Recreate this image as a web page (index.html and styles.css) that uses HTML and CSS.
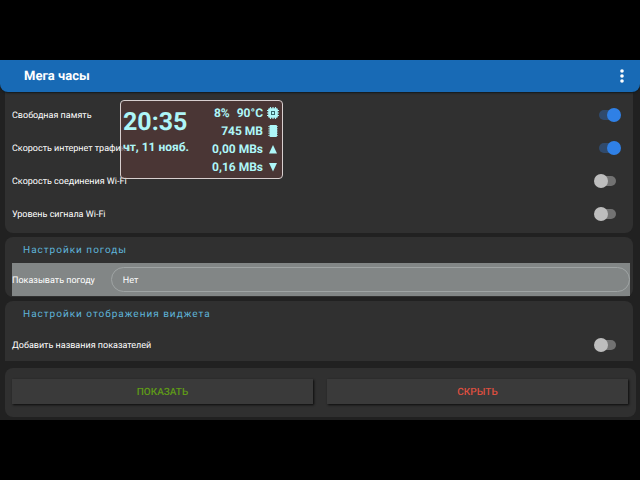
FILE: index.html
```html
<!DOCTYPE html>
<html lang="ru">
<head>
    <meta charset="utf-8">
    <title>Мега часы</title>
    <link rel="stylesheet" href="styles.css">
</head>
<body>
    <div class="app">
        <header class="toolbar">
            <h1>Мега часы</h1>
            <button class="menu-button" type="button" aria-label="Меню">
                <svg width="4" height="14" viewBox="0 0 4 14" fill="#fff">
                    <circle cx="2" cy="2" r="1.8"/>
                    <circle cx="2" cy="7" r="1.8"/>
                    <circle cx="2" cy="12" r="1.8"/>
                </svg>
            </button>
        </header>

        <main class="settings">
            <section class="card card-first">
                <div class="row">
                    <label for="memory">Свободная память</label>
                    <input class="switch" type="checkbox" id="memory" checked>
                </div>
                <div class="row">
                    <label for="traffic">Скорость интернет трафика</label>
                    <input class="switch" type="checkbox" id="traffic" checked>
                </div>
                <div class="row">
                    <label for="wifiSpeed">Скорость соединения Wi-Fi</label>
                    <input class="switch" type="checkbox" id="wifiSpeed">
                </div>
                <div class="row">
                    <label for="wifiSignal">Уровень сигнала Wi-Fi</label>
                    <input class="switch" type="checkbox" id="wifiSignal">
                </div>
            </section>

            <section class="card card-weather">
                <h2>Настройки погоды</h2>
                <div class="row-selected">
                    <label for="weather">Показывать погоду</label>
                    <select id="weather">
                        <option>Нет</option>
                    </select>
                </div>
            </section>

            <section class="card card-last">
                <h2>Настройки отображения виджета</h2>
                <div class="row">
                    <label for="names">Добавить названия показателей</label>
                    <input class="switch" type="checkbox" id="names">
                </div>
            </section>
        </main>

        <footer class="actions">
            <button class="show" type="button">ПОКАЗАТЬ</button>
            <button class="hide" type="button">СКРЫТЬ</button>
        </footer>

        <!-- floating clock widget -->
        <div class="widget">
            <div class="clock">
                <div class="time">20:35</div>
                <div class="date">чт, 11 нояб.</div>
            </div>
            <div class="stats">
                <div class="stat">
                    <span>8%</span>
                    <span class="temp">90°C</span>
                    <svg width="12" height="12" viewBox="0 0 12 12">
                        <path d="M3.5 0v12M6 0v12M8.5 0v12M0 3.5h12M0 6h12M0 8.5h12" stroke="#aef6f8" stroke-width="1.2"/>
                        <rect x="1.2" y="1.2" width="9.6" height="9.6" rx="1" fill="#aef6f8"/>
                        <rect x="4.5" y="4.5" width="3" height="3" fill="#aef6f8" stroke="#35686c"/>
                    </svg>
                </div>
                <div class="stat">
                    <span>745 MB</span>
                    <svg width="12" height="12" viewBox="0 0 12 12">
                        <path d="M1 1.5h10M1 3.8h10M1 6h10M1 8.2h10M1 10.5h10" stroke="#aef6f8" stroke-width="1" opacity="0.6"/>
                        <rect x="2.5" y="0" width="7.5" height="12" rx="1" fill="#aef6f8"/>
                    </svg>
                </div>
                <div class="stat">
                    <span>0,00 MBs</span>
                    <svg width="12" height="12" viewBox="0 0 12 12">
                        <path d="M6 2l4 8.5H2z" fill="#aef6f8"/>
                    </svg>
                </div>
                <div class="stat">
                    <span>0,16 MBs</span>
                    <svg width="12" height="12" viewBox="0 0 12 12">
                        <path d="M2 2h8L6 10.5z" fill="#aef6f8"/>
                    </svg>
                </div>
            </div>
        </div>
    </div>
</body>
</html>
```
FILE: styles.css
```css
* {
    box-sizing: border-box;
}
body {
    margin: 0;
    min-height: 100vh;
    display: flex;
    flex-direction: column;
    justify-content: center;
    background-color: #000;
    color: #fff;
    font-family: Roboto, "Liberation Sans", sans-serif;
    font-size: 9px;
    line-height: 12px;
    text-rendering: geometricPrecision;
}
h1, h2 {
    margin: 0;
}
button, select {
    font-family: inherit;
    font-size: inherit;
    text-rendering: inherit;
}
.app {
    position: relative;
    background-color: #212121;
    padding-bottom: 3px;
}
.toolbar {
    display: flex;
    align-items: center;
    justify-content: space-between;
    height: 32px;
    padding: 0 16px 0 24px;
    background-color: #186ab5;
    border-radius: 0 0 8px 8px;
    box-shadow: 0 1px 2px #10181c;
    position: relative;
}
.toolbar h1 {
    padding-top: 2px;
    font-size: 13px;
    line-height: 16px;
    font-weight: 700;
    color: #fff;
}
.menu-button {
    display: flex;
    padding: 0;
    border: none;
    background: none;
}
.settings {
    display: flex;
    flex-direction: column;
    gap: 4px;
    padding: 0 7px 0 5px;
}
.card {
    background-color: #303030;
    border-radius: 8px;
}
.card-first {
    padding: 6px 0 3px;
    border-radius: 0 0 8px 8px;
}
.card-last {
    border-radius: 8px 8px 0 0;
}
.card h2 {
    padding: 8px 18px 6px;
    font-size: 10px;
    line-height: 12px;
    font-weight: 400;
    letter-spacing: 1px;
    color: #5fb4d9;
}
.card-last h2 {
    padding-bottom: 7px;
}
.row {
    display: flex;
    align-items: center;
    justify-content: space-between;
    height: 33px;
    padding: 0 12px 0 7px;
}
.row-selected {
    display: flex;
    align-items: center;
    gap: 16px;
    height: 33px;
    margin: 0 3px 0 7px;
    background-color: #828686;
}
.card-weather {
    padding-bottom: 1px;
}
.row label, .row-selected label {
    padding-top: 2px;
}
.row-selected select {
    flex: 1;
    height: 25px;
    padding: 2px 11px 0;
    appearance: none;
    border: 1px solid #9fa4a4;
    border-radius: 13px;
    background-color: transparent;
    color: #fff;
}
.switch {
    appearance: none;
    position: relative;
    width: 27px;
    height: 14px;
    margin: 0;
}
.switch::before {
    content: "";
    position: absolute;
    left: 5px;
    right: 5px;
    top: 2px;
    bottom: 2px;
    border-radius: 5px;
    background-color: #727272;
}
.switch::after {
    content: "";
    position: absolute;
    left: 0;
    top: 0;
    width: 14px;
    height: 14px;
    border-radius: 50%;
    background-color: #bdbdbd;
}
.switch:checked::before {
    background-color: #304a6c;
}
.switch:checked::after {
    left: auto;
    right: 0;
    background-color: #2f80e6;
}
.actions {
    display: flex;
    gap: 14px;
    margin: 7px 4px 0 5px;
    padding: 11px 8px 13px 7px;
    background-color: #303030;
    border-radius: 8px;
}
.actions button {
    flex: 1;
    height: 25px;
    padding: 2px 0 0;
    border: none;
    background-color: #3a3a3a;
    box-shadow: 1px 1px 2px #0c0c0c;
    font-size: 10px;
    font-weight: 500;
}
.actions .show {
    color: #5f9a17;
}
.actions .hide {
    color: #dc4f40;
}
.widget {
    position: absolute;
    left: 120px;
    top: 40px;
    width: 163px;
    display: flex;
    justify-content: space-between;
    padding: 3px 3px 2px 2px;
    border: 1px solid #d8cfcf;
    border-radius: 4px;
    background-color: rgba(89, 59, 57, 0.65);
    color: #aef6f8;
    font-size: 12px;
    font-weight: 700;
    white-space: nowrap;
}
.time {
    padding-top: 3px;
    font-size: 25px;
    line-height: 32px;
}
.date {
    line-height: 16px;
}
.stat {
    display: flex;
    align-items: center;
    justify-content: flex-end;
    gap: 4px;
    height: 18px;
    line-height: 18px;
}
.temp {
    margin-left: 3px;
}
```
